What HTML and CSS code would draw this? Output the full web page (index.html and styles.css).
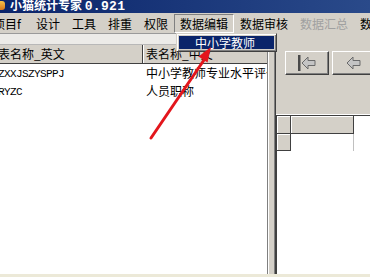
FILE: index.html
```html
<!DOCTYPE html>
<html lang="zh-CN">
<head>
    <meta charset="UTF-8">
    <title>小猫统计专家 0.921</title>
    <link rel="stylesheet" href="styles.css">
</head>
<body>
    <div class="app">
        <div class="titlebar">
            <span class="app-icon"></span>
            <span class="title">小猫统计专家 <span class="ver">0.921</span></span>
        </div>

        <div class="menubar">
            <span class="menu-item first">项目f</span>
            <span class="menu-item">设计</span>
            <span class="menu-item">工具</span>
            <span class="menu-item">排重</span>
            <span class="menu-item">权限</span>
            <span class="menu-item open">数据编辑</span>
            <span class="menu-item">数据审核</span>
            <span class="menu-item disabled">数据汇总</span>
            <span class="menu-item">数据导出</span>
        </div>

        <div class="workspace">
            <div class="table-pane">
                <div class="pane-strip"></div>
                <div class="grid">
                    <div class="grid-row head">
                        <div class="cell c1">表名称_英文</div>
                        <div class="cell c2">表名称_中文</div>
                    </div>
                    <div class="grid-row">
                        <div class="cell c1 code">ZXXJSZYSPPJ</div>
                        <div class="cell c2">中小学教师专业水平评价</div>
                    </div>
                    <div class="grid-row">
                        <div class="cell c1 code">RYZC</div>
                        <div class="cell c2">人员职称</div>
                    </div>
                </div>
            </div>

            <div class="splitter"></div>

            <div class="detail-pane">
                <div class="nav-buttons">
                    <button class="nav-btn">
                        <svg viewBox="0 0 20 18" width="20" height="18">
                            <rect x="1" y="1" width="2.5" height="16" fill="#4a4a4a"></rect>
                            <path d="M5 9L11 3V6.5H18V11.5H11V15Z" fill="#c4c4c4" stroke="#6a6a6a" stroke-width="1"></path>
                        </svg>
                    </button>
                    <button class="nav-btn">
                        <svg viewBox="0 0 20 18" width="20" height="18">
                            <path d="M3 9L9 3V6.5H16V11.5H9V15Z" fill="#c4c4c4" stroke="#6a6a6a" stroke-width="1"></path>
                        </svg>
                    </button>
                </div>
                <div class="detail-grid">
                    <div class="dg-row">
                        <div class="dg-ind"></div>
                        <div class="dg-head"></div>
                    </div>
                    <div class="dg-row">
                        <div class="dg-ind"></div>
                        <div class="dg-cell"></div>
                    </div>
                </div>
            </div>
        </div>

        <div class="statusbar"></div>

        <!-- 展开的下拉菜单 -->
        <div class="dropdown">
            <div class="dropdown-item">中小学教师</div>
        </div>

        <!-- 红色指示箭头 -->
        <svg class="pointer" width="370" height="277" viewBox="0 0 370 277">
            <line x1="151" y1="138" x2="204" y2="60" stroke="#e3161c" stroke-width="3" stroke-linecap="round"></line>
            <polygon points="211,47 207.5,62.5 198.5,56.5" fill="#e3161c"></polygon>
        </svg>
    </div>
</body>
</html>
```

FILE: styles.css
```css
* {
    margin: 0;
    padding: 0;
    box-sizing: border-box;
}

body {
    width: 370px;
    height: 277px;
    overflow: hidden;
    background: #d4d0c8;
    font-family: "Noto Sans CJK SC", "Liberation Sans", sans-serif;
    font-size: 12px;
    color: #000;
}

.app {
    position: relative;
    width: 370px;
    height: 277px;
    display: flex;
    flex-direction: column;
    overflow: hidden;
}

/* 标题栏 */
.titlebar {
    height: 13px;
    flex: none;
    display: flex;
    align-items: flex-start;
    background: linear-gradient(to right, #0a246a, #2a4a8a);
    overflow: hidden;
}

.app-icon {
    width: 5px;
    height: 9px;
    margin-top: 1px;
    background: linear-gradient(#f6c24a, #d8761a);
    border-radius: 0 3px 3px 0;
}

.title {
    margin-left: 5px;
    margin-top: -2px;
    line-height: 14px;
    color: #fff;
    font-weight: bold;
    white-space: nowrap;
}

.title .ver {
    font-family: "Liberation Mono", monospace;
    font-size: 13px;
    letter-spacing: 0.3px;
}

/* 菜单栏 */
.menubar {
    height: 20px;
    flex: none;
    display: flex;
    align-items: stretch;
    white-space: nowrap;
    overflow: hidden;
    background: #d4d0c8;
}

.menu-item {
    flex: none;
    padding: 0 5px;
    line-height: 18px;
    margin-top: 1px;
    border: 1px solid transparent;
}

.menu-item.first {
    margin-left: -13px;
    width: 43px;
}

.menu-item.open {
    border-color: #808080 #fff #fff #808080;
}

.menu-item.disabled {
    color: #a0a0a0;
}

/* 主体 */
.workspace {
    flex: 1;
    display: flex;
    min-height: 0;
}

.table-pane {
    width: 267px;
    display: flex;
    flex-direction: column;
    background: #fff;
}

.pane-strip {
    height: 12px;
    flex: none;
    background: #ecebe8;
    border-top: 1px solid #9a9a9a;
    border-bottom: 1px solid #b8b8b8;
}

.grid {
    flex: 1;
    background: #fff;
    overflow: hidden;
}

.grid-row {
    display: flex;
    height: 18px;
    line-height: 18px;
}

.grid-row.head {
    height: 19px;
    background: #d4d0c8;
    border-bottom: 1px solid #404040;
}

.cell {
    white-space: nowrap;
    overflow: hidden;
}

.c1 {
    width: 145px;
    flex: none;
    margin-left: -2px;
}

.c2 {
    flex: 1;
    padding-left: 3px;
}

.head .c1 {
    border-right: 1px solid #404040;
}

.head .c2 {
    border-left: 1px solid #fff;
    padding-left: 2px;
}

.code {
    font-family: "Liberation Mono", monospace;
    font-size: 11px;
    letter-spacing: -0.6px;
    padding-top: 1px;
}

.splitter {
    width: 9px;
    flex: none;
    background: #d4d0c8;
    border-left: 1px solid #808080;
    border-right: 1px solid #404040;
    box-shadow: inset 1px 0 #fff, inset -1px 0 #808080;
}

/* 右侧明细 */
.detail-pane {
    flex: 1;
    display: flex;
    flex-direction: column;
    background: #d4d0c8;
}

.nav-buttons {
    display: flex;
    gap: 3px;
    padding: 18px 0 0 9px;
    height: 82px;
    flex: none;
    border-bottom: 1px solid #fff;
}

.nav-btn {
    width: 44px;
    height: 24px;
    flex: none;
    display: flex;
    align-items: center;
    justify-content: center;
    background: #d4d0c8;
    border: 1px solid;
    border-color: #fff #404040 #404040 #fff;
    box-shadow: inset -1px -1px #808080;
}

.detail-grid {
    flex: 1;
    background: #fff;
    border-top: 1px solid #404040;
    border-left: 1px solid #404040;
}

.dg-row {
    display: flex;
    height: 18px;
}

.dg-row + .dg-row {
    height: 17px;
}

.dg-ind {
    width: 14px;
    flex: none;
    background: #d4d0c8;
    border-right: 1px solid #404040;
    border-bottom: 1px solid #404040;
    box-shadow: inset 1px 1px #fff;
}

.dg-head {
    width: 63px;
    flex: none;
    background: #d4d0c8;
    border-right: 1px solid #404040;
    border-bottom: 1px solid #404040;
    box-shadow: inset 1px 1px #fff;
}

.dg-cell {
    width: 63px;
    flex: none;
    border-right: 1px solid #c0c0c0;
}

.statusbar {
    height: 3px;
    flex: none;
    background: #ece9d8;
}

/* 下拉菜单 */
.dropdown {
    position: absolute;
    left: 176px;
    top: 33px;
    width: 101px;
    height: 19px;
    padding: 2px;
    background: #d4d0c8;
    border: 1px solid;
    border-color: #d4d0c8 #404040 #404040 #d4d0c8;
    box-shadow: inset 1px 1px #fff, inset -1px -1px #808080;
}

.dropdown-item {
    height: 100%;
    padding-left: 16px;
    line-height: 14px;
    background: #0a246a;
    color: #fff;
    white-space: nowrap;
}

.pointer {
    position: absolute;
    left: 0;
    top: 0;
    pointer-events: none;
}
```
